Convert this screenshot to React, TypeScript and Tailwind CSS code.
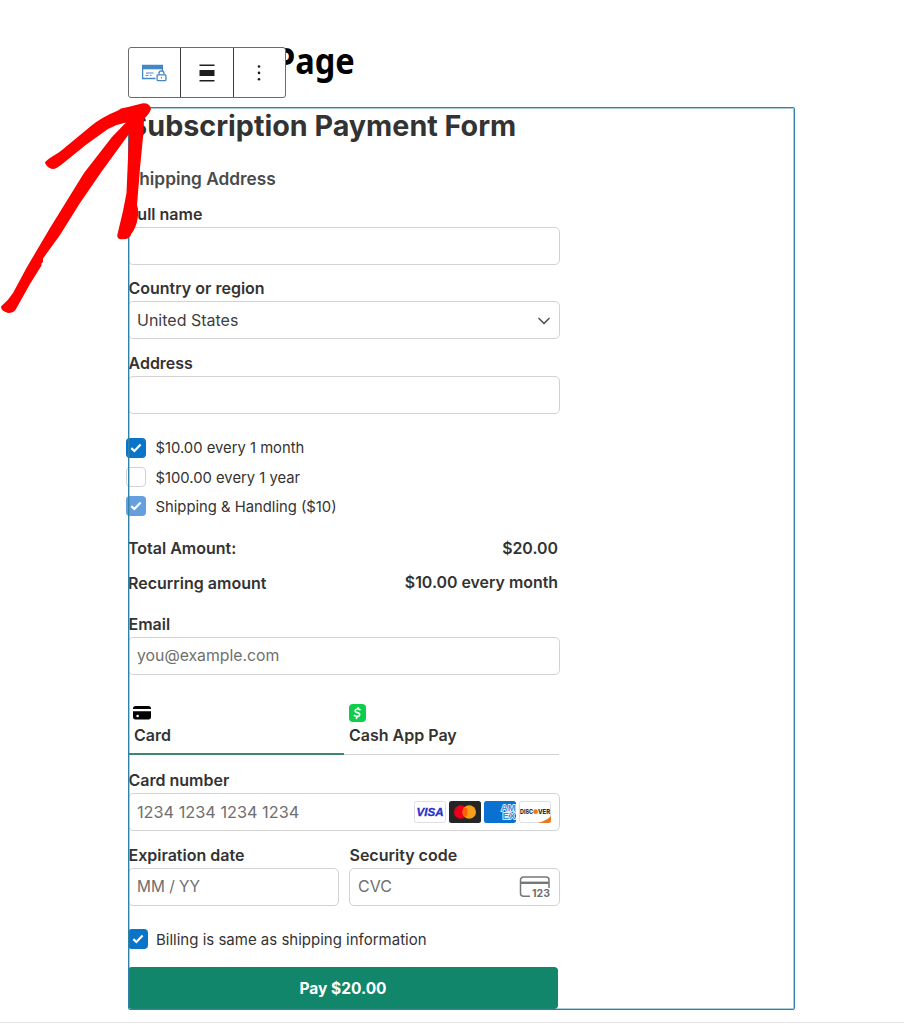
import React from "react";
import { ChevronDown } from "lucide-react";
import clsx from "clsx";

function BlockToolbar() {
  return (
    <div className="absolute left-[128px] top-[47px] flex h-[51px] w-[158px] rounded-[3px] border border-[#6b6b6b] bg-white">
      <button aria-label="Payment form" className="grid w-[52px] place-items-center border-r border-[#3c3c3c]">
        <svg className="-ml-px" width="26" height="18" viewBox="0 0 26 18" fill="none" stroke="#4388c4">
          <path d="M14.5 14.5H1.6V1.5h19.8v6" strokeWidth="1.3" />
          <rect x="1" y="1" width="21" height="4.3" fill="#4388c4" stroke="none" />
          <path d="M5 9h7.500M4.500 11.400h3M9 11.400h1.500" strokeWidth="1" />
          <rect x="16.100" y="10.900" width="8.800" height="5.800" rx="0.800" strokeWidth="1.300" />
          <path d="M18 10.600V9.300a2.500 2.500 0 0 1 5 0v1.300" strokeWidth="1.300" />
          <path d="M20.500 13v1.600" strokeWidth="1" />
        </svg>
      </button>
      <button aria-label="Align" className="grid w-[53px] place-items-center border-r border-[#3c3c3c]">
        <svg width="16" height="18" viewBox="0 0 16 18" fill="#1e1e1e">
          <path d="M.5 .4h15v1.500H.5zM.5 5.900h15v6.100H.5zM.5 16h15v1.500H.5z" />
        </svg>
      </button>
      <button aria-label="Options" className="grid flex-1 place-items-center">
        <svg className="-ml-[2px]" width="4" height="18" viewBox="0 0 4 18" fill="#1e1e1e">
          <circle cx="2" cy="2.500" r="1.300" />
          <circle cx="2" cy="8.900" r="1.300" />
          <circle cx="2" cy="15.300" r="1.300" />
        </svg>
      </button>
    </div>
  );
}

function Field({ label, children, className }: { label: string; children?: React.ReactNode; className?: string }) {
  return (
    <div className={clsx("h-[74.6px]", className)}>
      <div className="flex h-[25.5px] items-center whitespace-nowrap pl-[0.5px] font-semibold">{label}</div>
      <div className="flex h-[38px] items-center justify-between rounded-[5px] border border-[#d2d2d2] pl-2 pr-2 text-[#6f6f6f]">
        {children}
      </div>
    </div>
  );
}

function Check({ state }: { state: "on" | "off" | "muted" }) {
  return (
    <span
      className={clsx(
        "grid size-5 shrink-0 place-items-center rounded-[4px]",
        state === "on" && "bg-[#0a74c9]",
        state === "muted" && "bg-[#659fdf]",
        state === "off" && "border border-[#d2d2d2] bg-white"
      )}
    >
      {state !== "off" && (
        <svg width="12" height="10" viewBox="0 0 12 10" fill="none" stroke="#fff" strokeWidth="2.2">
          <path d="M1.3 5.1 4.4 8l6.2-6.4" />
        </svg>
      )}
    </span>
  );
}

const plans: { text: string; state: "on" | "off" | "muted" }[] = [
  { text: "$10.00 every 1 month", state: "on" },
  { text: "$100.00 every 1 year", state: "off" },
  { text: "Shipping & Handling ($10)", state: "muted" },
];

function CardBrands() {
  return (
    <div className="flex gap-[3px]">
      <svg width="32" height="22" viewBox="0 0 32 22">
        <rect x=".5" y=".5" width="31" height="21" rx="2" fill="#fff" stroke="#dedfe6" />
        <text x="16" y="15" textAnchor="middle" textLength="27" lengthAdjust="spacingAndGlyphs" fontFamily="Liberation Sans, sans-serif" fontWeight="700" fontStyle="italic" fontSize="11.500" fill="#2930c8" stroke="#2930c8" strokeWidth=".3">VISA</text>
      </svg>
      <svg width="32" height="22" viewBox="0 0 32 22">
        <rect width="32" height="22" rx="2.5" fill="#252525" />
        <circle cx="11.8" cy="11" r="6.8" fill="#eb001b" />
        <circle cx="20.2" cy="11" r="6.8" fill="#f79e1b" />
        <path d="M16 5.65a6.8 6.8 0 0 1 0 10.7 6.8 6.8 0 0 1 0-10.7z" fill="#ff5f00" />
      </svg>
      <svg width="32" height="22" viewBox="0 0 32 22">
        <rect width="32" height="22" rx="2.5" fill="#0a70d1" />
        <text fontFamily="Liberation Sans, sans-serif" fontWeight="700" fontSize="8.800" fill="#3b8ddb" stroke="#fff" strokeWidth="1.300" paintOrder="stroke">
          <tspan x="17" y="10.400" textLength="14.500" lengthAdjust="spacingAndGlyphs">AM</tspan>
          <tspan x="18.500" y="18.200" textLength="13" lengthAdjust="spacingAndGlyphs">EX</tspan>
        </text>
      </svg>
      <svg width="32" height="22" viewBox="0 0 32 22">
        <rect x=".5" y=".5" width="31" height="21" rx="2" fill="#fff" stroke="#dedfe6" />
        <path d="M32 15v4.500a2.500 2.500 0 0 1-2.500 2.500H18.500C24 20.800 28.500 18.500 32 15z" fill="#e8791f" />
        <g fontFamily="Inter, sans-serif" fontWeight="800" fontSize="6.400" fill="#2b2b2b">
          <text x="1" y="13" textLength="13" lengthAdjust="spacingAndGlyphs">DISC</text>
          <text x="19" y="13" textLength="12.200" lengthAdjust="spacingAndGlyphs">VER</text>
        </g>
        <circle cx="16.600" cy="10.700" r="2.400" fill="#f27712" />
      </svg>
    </div>
  );
}

function CvcIcon() {
  return (
    <svg width="32" height="22" viewBox="0 0 32 22" fill="none" stroke="#777">
      <path d="M11 20.300H4.500a3 3 0 0 1-3-3V4a3 3 0 0 1 3-3h22.500a3 3 0 0 1 3 3v8" strokeWidth="1.500" />
      <path d="M1.500 6.800h28.500" strokeWidth="2.400" />
      <text x="13" y="21.300" textLength="18" lengthAdjust="spacingAndGlyphs" fontFamily="Inter, sans-serif" fontWeight="700" fontSize="10" fill="#6f6f6f" stroke="none">123</text>
    </svg>
  );
}

function MethodTabs() {
  return (
    <div className="flex h-[54.500px] w-[431px] font-semibold">
      <div className="flex w-[215.500px] flex-col border-b-2 border-[#3a8670] pl-[6px]">
        <svg className="-ml-px mt-[6px]" width="18" height="14" viewBox="0 0 18 14">
          <path d="M2.500 0h13A2.500 2.500 0 0 1 18 2.500V3H0v-.5A2.500 2.500 0 0 1 2.500 0zM0 5.200h18v6A2.500 2.500 0 0 1 15.500 13.500h-13A2.500 2.500 0 0 1 0 11.200z" fill="#000" />
          <circle cx="4.600" cy="10" r="1.300" fill="#fff" />
        </svg>
        <span className="mt-[3px] leading-6">Card</span>
      </div>
      <div className="flex flex-1 flex-col border-b border-[#d2d2d2] pl-[5.500px]">
        <svg className="mt-[4px]" width="17" height="18" viewBox="0 0 17 18">
          <rect width="17" height="18" rx="4" fill="#0cce4c" />
          <path d="M11.500 6.200C10.500 5.200 9.300 4.900 8.200 5c-2.600.3-2.600 2.800-.6 3.400l1.500.4c2.400.7 2 3.400-.7 3.600-1.300.1-2.500-.3-3.400-1.200M9.400 3 8.900 5M7.900 12.500 7.400 15" fill="none" stroke="#fff" strokeWidth="1.700" />
        </svg>
        <span className="mt-px leading-6">Cash App Pay</span>
      </div>
    </div>
  );
}

function Arrow() {
  return (
    <svg className="pointer-events-none absolute left-0 top-[95px]" width="160" height="225" viewBox="0 95 160 225" fill="#fe0000">
      <path d="M45 163C45 160 59 153 62 150L91 126Q102 117 118 110.500L121 108.500Q129 107 134 105.500L143 103.300Q150 103 151 109Q150 113 144 119L143.500 132L140 168L137 205Q139 211 137.500 219Q136 228 131.500 233.500Q130 238 126 239L121 239.300Q117 239 117.300 235L123 211L126.500 193L129 134L102 171L80 203L60 235L43 258.500L43 262Q41 263 41.500 265.500L30 284L16 309Q14 313 8 313Q1 311 1 306.500Q8 301 13 293L27 267L50 228L84 173L112 137L126 122.500Q117 124 108 129L87 144L61 165Q57 168 54 169Q48 169 45 163Z" />
    </svg>
  );
}

export default function App() {
  return (
    <div className="relative h-[1024px] w-[904px] overflow-hidden bg-white pt-[38px] font-['Inter',sans-serif] text-[16px] leading-none text-[#333]">
      <h1 className="ml-[275px] h-[69px] origin-left scale-x-[0.93] font-['Noto_Sans',sans-serif] text-[35px] font-bold leading-[46px] text-black">Page</h1>

      <section className="relative ml-[128px] h-[903px] w-[667px]">
        <div className="w-[432px]">
          <h2 className="h-[60px] whitespace-nowrap pl-[0.5px] text-[28.7px] font-bold leading-[38px]">Subscription Payment Form</h2>
          <h3 className="h-[34px] text-[17.3px] font-semibold leading-6 text-[#4a4a4a]">Shipping Address</h3>

          <Field label="Full name" />
          <Field label="Country or region">
            <span className="text-[#404040]">United States</span>
            <ChevronDown className="-mr-[3px] mt-[2px] size-[20px] text-[#555]" strokeWidth={2} />
          </Field>
          <Field label="Address" />

          <ul className="-ml-[2px] mt-[8.5px]">
            {plans.map((p) => (
              <li key={p.text} className="flex h-[29.2px] items-center gap-[9.5px] text-[14.8px]">
                <Check state={p.state} />
                <span className="pt-[2px]">{p.text}</span>
              </li>
            ))}
          </ul>

          <dl className="mt-[10px] w-[430px] font-semibold">
            <div className="flex h-[34.5px] items-center justify-between">
              <dt>Total Amount:</dt>
              <dd className="pt-px text-[15.9px]">$20.00</dd>
            </div>
            <div className="flex h-[34.5px] items-center justify-between">
              <dt>Recurring amount</dt>
              <dd className="pt-px text-[15.9px]">$10.00 every month</dd>
            </div>
          </dl>

          <Field label="Email" className="mt-[11.5px]">
            <span className="text-[15.8px]">you@example.com</span>
          </Field>

          <div className="mt-[14.5px]">
            <MethodTabs />
          </div>

          <Field label="Card number" className="mt-[12.5px]">
            <span className="text-[16.3px]">1234 1234 1234 1234</span>
            <CardBrands />
          </Field>
          <div className="flex gap-[10px]">
            <Field label="Expiration date" className="w-[211px]">
              <span className="text-[15.4px]">MM / YY</span>
            </Field>
            <Field label="Security code" className="flex-1">
              <span className="pb-px">CVC</span>
              <CvcIcon />
            </Field>
          </div>

          <div className="mt-[12px] flex h-5 items-center gap-2 text-[15px]">
            <Check state="on" />
            <span className="pt-px">Billing is same as shipping information</span>
          </div>
          <button className="mt-[18px] h-[42px] w-[430px] rounded-[4px] bg-[#11866b] pt-[2px] text-[15.5px] font-bold text-white">Pay $20.00</button>
        </div>
        {/* selection outline of the block */}
        <div className="pointer-events-none absolute inset-0 rounded-[2px] border border-[#2f82a6] shadow-[inset_0_0_0_1px_rgba(47,130,166,0.4)]" />
      </section>

      <div className="mt-[12px] h-px bg-[#e6e6e6]" />
      <BlockToolbar />
      <Arrow />
    </div>
  );
}
